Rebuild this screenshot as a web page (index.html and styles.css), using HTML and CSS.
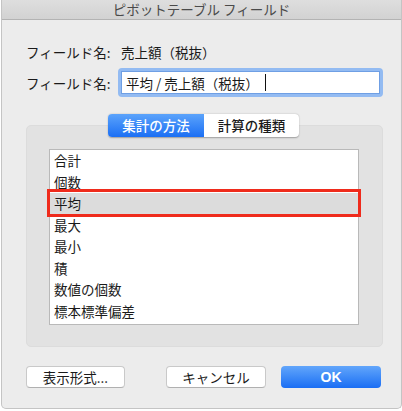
FILE: index.html
```html
<!DOCTYPE html>
<html lang="ja">
<head>
<meta charset="utf-8">
<link rel="stylesheet" href="styles.css">
</head>
<body>
<div class="window">
  <div class="titlebar">ピボットテーブル フィールド</div>
  <div class="content">
    <div class="fields">
      <div class="label">フィールド名:</div>
      <div class="value">売上額（税抜）</div>
      <div class="label">フィールド名:</div>
      <div class="input"><div class="input-inner"><span>平均 / 売上額（税抜）</span><span class="caret"></span></div></div>
    </div>
    <div class="tabs">
      <div class="tab active">集計の方法</div>
      <div class="tab">計算の種類</div>
    </div>
    <div class="group">
      <ul class="list">
        <li>合計</li>
        <li>個数</li>
        <li class="selected">平均</li>
        <li>最大</li>
        <li>最小</li>
        <li>積</li>
        <li>数値の個数</li>
        <li>標本標準偏差</li>
      </ul>
    </div>
    <div class="buttons">
      <div class="btn fmt">表示形式...</div>
      <div class="btn cancel">キャンセル</div>
      <div class="btn ok">OK</div>
    </div>
  </div>
</div>
</body>
</html>
```
FILE: styles.css
```css
html, body {
  margin: 0;
  padding: 0;
  background: #ffffff;
}
body {
  font-family: "Noto Sans CJK JP", "Noto Sans", sans-serif;
  font-size: 13.5px;
  color: #1a1a1a;
}
.window {
  box-sizing: border-box;
  width: 401px;
  height: 409px;
  margin-left: 1px;
  background: #ececec;
  border: 1px solid #c4c4c4;
  border-top: none;
  border-radius: 0 0 5px 5px;
  overflow: hidden;
}
.titlebar {
  box-sizing: border-box;
  height: 20px;
  background: linear-gradient(#dedede, #d2d2d2);
  border-bottom: 1px solid #b3b3b3;
  text-align: center;
  line-height: 19px;
  color: #4a4a4a;
  font-size: 13.5px;
}
.content {
  padding: 0 0 0 23px;
}
.fields {
  display: grid;
  grid-template-columns: 93px 265px;
  row-gap: 7px;
  margin-top: 23px;
  align-items: center;
}
.label {
  padding-left: 1px;
  line-height: 18px;
}
.value {
  padding-left: 3px;
  line-height: 18px;
}
.input {
  box-sizing: border-box;
  height: 29px;
  padding: 3px;
  background: #93bbf2;
  border-radius: 4px;
}
.input-inner {
  box-sizing: border-box;
  height: 23px;
  background: #ffffff;
  border: 1px solid #6f9fe4;
  padding-left: 4px;
  display: flex;
  align-items: center;
  line-height: 18px;
}
.caret {
  display: inline-block;
  width: 1px;
  height: 17px;
  background: #111;
  margin-left: 6px;
}
.tabs {
  position: relative;
  z-index: 1;
  display: flex;
  width: 191px;
  height: 23px;
  margin: 17px 0 -12px 83px;
  border-radius: 4px;
  box-shadow: 0 0.5px 1.5px rgba(0,0,0,0.3);
  background: #fff;
}
.tab {
  flex: 1;
  text-align: center;
  line-height: 23px;
  font-size: 13.5px;
  font-weight: 500;
}
.tab.active {
  flex: 0 0 96px;
  color: #fff;
  background: linear-gradient(#5ba3fb, #1b6ff4);
  border-radius: 4px 0 0 4px;
}
.group {
  box-sizing: border-box;
  width: 357px;
  height: 222px;
  margin-left: 1px;
  padding: 23px 0 0 23px;
  background: #e2e2e2;
  border: 1px solid #dcdcdc;
  border-radius: 5px;
}
.list {
  box-sizing: border-box;
  list-style: none;
  margin: 0 0 0 -1px;
  padding: 0 0 2px 0;
  width: 310px;
  height: 176px;
  background: #fff;
  border: 1px solid #b9b9b9;
}
.list li {
  height: 21.5px;
  line-height: 21.5px;
  padding-left: 4px;
}
.list li.selected {
  position: relative;
  background: #dcdcdc;
}
.list li.selected::after {
  content: "";
  position: absolute;
  left: -3px;
  right: -3px;
  top: -4px;
  bottom: -2.5px;
  border: 3px solid #ef2b1c;
}
.buttons {
  display: flex;
  margin-top: 19px;
}
.btn {
  box-sizing: border-box;
  height: 22px;
  line-height: 20px;
  text-align: center;
  background: #fff;
  border: 1px solid #c9c9c9;
  border-bottom-color: #b0b0b0;
  border-radius: 4px;
}
.fmt {
  width: 99px;
  margin-left: 1px;
}
.cancel {
  width: 100px;
  margin-left: 41px;
}
.ok {
  width: 100px;
  margin-left: 15px;
  color: #fff;
  font-weight: 600;
  font-family: "Liberation Sans", "Noto Sans", sans-serif;
  font-size: 14px;
  border: none;
  line-height: 22px;
  background: linear-gradient(#62a6fb, #1a6ef4);
}
```
